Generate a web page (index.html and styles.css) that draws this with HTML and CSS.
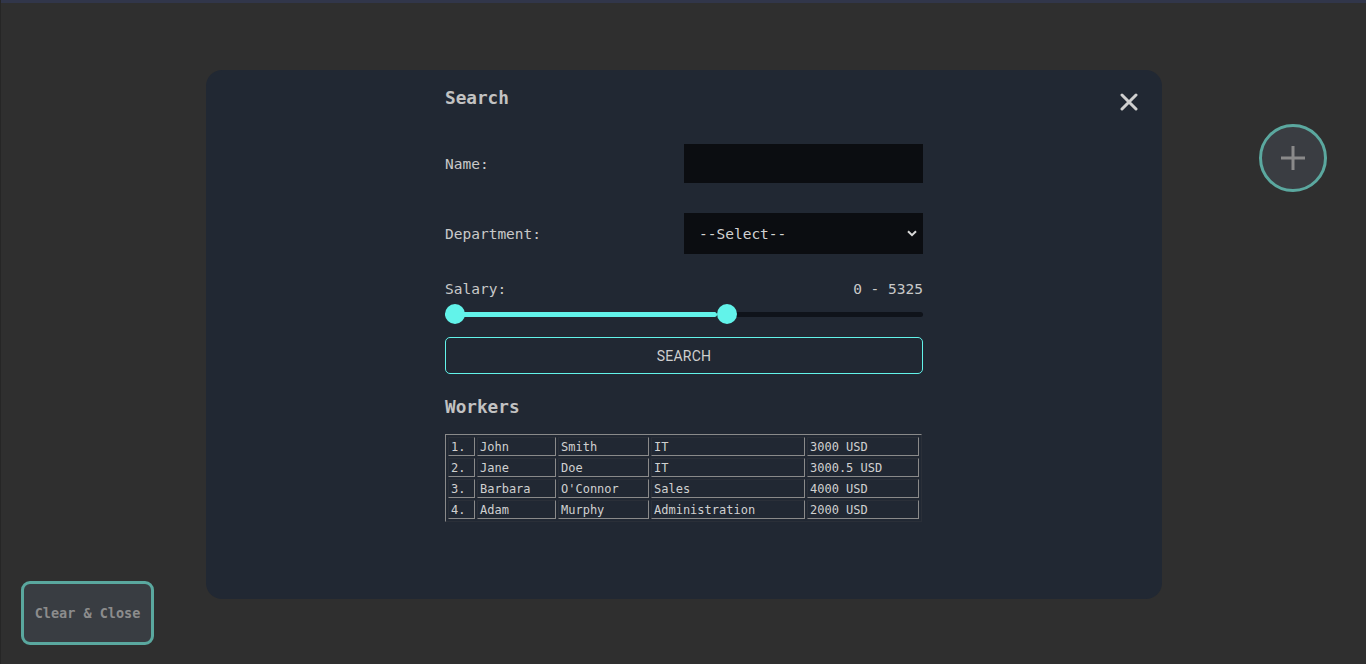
FILE: index.html
```html
<!DOCTYPE html>
<html>
<head>
<meta charset="utf-8">
<link rel="stylesheet" href="styles.css">
</head>
<body>
<div class="topbar"></div>
<div class="stage">
  <div class="modal">
    <button class="close" aria-label="close">
      <svg width="18" height="18" viewBox="0 0 18 18"><path d="M2 2L16 16M16 2L2 16" stroke="#d0d0d0" stroke-width="3" stroke-linecap="round"/></svg>
    </button>
    <div class="content">
      <h2 class="title">Search</h2>
      <div class="row name-row">
        <label>Name:</label>
        <div class="input"></div>
      </div>
      <div class="row dept-row">
        <label>Department:</label>
        <div class="select"><span>--Select--</span>
          <svg width="10" height="7" viewBox="0 0 10 7"><path d="M1 1.2L5 5.2L9 1.2" stroke="#d8d8d8" stroke-width="2" fill="none"/></svg>
        </div>
      </div>
      <div class="salary-head"><span>Salary:</span><span>0 - 5325</span></div>
      <div class="slider">
        <div class="track"><div class="fill" style="width:57%"></div></div>
        <div class="thumb thumb-a"></div>
        <div class="thumb thumb-b" style="left:57%"></div>
      </div>
      <button class="search-btn">SEARCH</button>
      <h2 class="title workers">Workers</h2>
      <table class="workers-table">
        <tr><td class="c1">1.</td><td class="c2">John</td><td class="c3">Smith</td><td class="c4">IT</td><td class="c5">3000 USD</td></tr>
        <tr><td class="c1">2.</td><td class="c2">Jane</td><td class="c3">Doe</td><td class="c4">IT</td><td class="c5">3000.5 USD</td></tr>
        <tr><td class="c1">3.</td><td class="c2">Barbara</td><td class="c3">O'Connor</td><td class="c4">Sales</td><td class="c5">4000 USD</td></tr>
        <tr><td class="c1">4.</td><td class="c2">Adam</td><td class="c3">Murphy</td><td class="c4">Administration</td><td class="c5">2000 USD</td></tr>
      </table>
    </div>
  </div>
</div>
<button class="fab" aria-label="add">
  <svg width="28" height="28" viewBox="0 0 28 28"><path d="M14 2V26M2 14H26" stroke="#8a8a8a" stroke-width="3"/></svg>
</button>
<button class="clear-btn">Clear &amp; Close</button>
</body>
</html>
```
FILE: styles.css
```css
* { box-sizing: border-box; }
html, body {
  margin: 0;
  padding: 0;
  height: 100%;
  background: #2f2f2f;
  font-family: "DejaVu Sans Mono", "Liberation Mono", monospace;
  overflow: hidden;
}
body { border-left: 1px solid #262626; }
.topbar {
  height: 3px;
  background: #31364a;
}
.stage {
  display: flex;
  justify-content: center;
  padding-top: 67px;
  padding-left: 1px;
}
.modal {
  position: relative;
  width: 956px;
  height: 529px;
  background: #212833;
  border-radius: 16px;
  display: flex;
  justify-content: center;
}
.close {
  position: absolute;
  top: 23px;
  right: 24px;
  background: none;
  border: none;
  padding: 0;
  width: 18px;
  height: 18px;
}
.content {
  width: 478px;
  padding-top: 17px;
  color: #c9c9c9;
}
.title {
  margin: 0;
  font-size: 17.7px;
  font-weight: bold;
  color: #c2c2c2;
  line-height: 22px;
}
.row {
  display: flex;
  align-items: center;
  justify-content: space-between;
  font-size: 14.5px;
}
.name-row { margin-top: 35px; }
.dept-row { margin-top: 30px; }
.input {
  width: 239px;
  height: 39px;
  background: #0b0d11;
}
.select {
  width: 239px;
  height: 41px;
  background: #0b0d11;
  display: flex;
  align-items: center;
  justify-content: space-between;
  padding: 0 6px 0 15px;
  color: #d2d2d2;
  font-size: 14.5px;
}
.salary-head {
  margin-top: 26px;
  display: flex;
  justify-content: space-between;
  font-size: 14.5px;
  line-height: 18px;
}
.slider {
  position: relative;
  height: 20px;
  margin: 6px 0 0;
}
.track {
  position: absolute;
  left: 0; right: 0;
  top: 8px;
  height: 5px;
  border-radius: 3px;
  background: #0f131a;
}
.fill {
  height: 100%;
  background: #62f3ea;
  border-radius: 3px;
}
.thumb {
  position: absolute;
  top: 0;
  width: 20px;
  height: 20px;
  border-radius: 50%;
  background: #62f3ea;
  left: 0;
}
.search-btn {
  display: block;
  width: 100%;
  height: 37px;
  margin-top: 13px;
  background: transparent;
  border: 1px solid #62f3ea;
  border-radius: 5px;
  color: #cfcfcf;
  font-family: Roboto, "Liberation Sans", sans-serif;
  font-size: 14px;
  letter-spacing: 0.2px;
}
.title.workers { margin-top: 22px; }
.workers-table {
  margin-top: 16px;
  width: 477px;
  border-collapse: separate;
  border-spacing: 2px;
  border: 1px solid;
  border-color: #8a8a8a #2a2f38 #2a2f38 #8a8a8a;
  font-size: 12px;
  color: #d0d0d0;
}
.workers-table td {
  border: 1px solid;
  border-color: #2a2f38 #8a8a8a #8a8a8a #2a2f38;
  padding: 0 2px;
  height: 19px;
  line-height: 16px;
  white-space: nowrap;
}
.c1 { width: 27px; }
.c2 { width: 79px; }
.c3 { width: 91px; }
.c4 { width: 154px; }
.fab {
  position: absolute;
  top: 124px;
  left: 1259px;
  width: 68px;
  height: 68px;
  border-radius: 50%;
  border: 3px solid #5ba89f;
  background: #3a3d42;
  display: flex;
  align-items: center;
  justify-content: center;
  padding: 0;
}
.clear-btn {
  position: absolute;
  left: 21px;
  top: 581px;
  width: 133px;
  height: 64px;
  border: 3px solid #5aa89f;
  border-radius: 9px;
  background: #393d42;
  color: #8c8c8c;
  font-family: "DejaVu Sans Mono", monospace;
  font-weight: bold;
  font-size: 13.5px;
  padding: 0;
}
```
